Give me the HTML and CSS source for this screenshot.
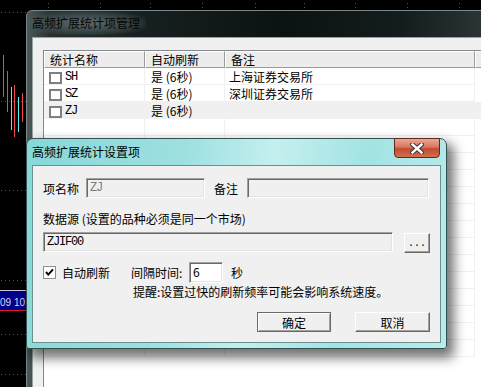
FILE: index.html
```html
<!DOCTYPE html>
<html lang="zh-CN">
<head>
    <meta charset="UTF-8">
    <meta name="viewport" content="width=device-width, initial-scale=1.0">
    <title>高频扩展统计设置项</title>
    <link rel="stylesheet" href="styles.css">
</head>
<body>
<div class="screen">
    <!-- 行情图 (背景) -->
    <svg class="chart" width="481" height="387" viewBox="0 0 481 387">
        <rect width="481" height="387" fill="#000"/>
        <g stroke="#d01a1a" stroke-width="1" stroke-dasharray="1 3">
            <line x1="1" y1="12.5" x2="26" y2="12.5"/>
            <line x1="1" y1="101.5" x2="26" y2="101.5"/>
            <line x1="1" y1="190.5" x2="26" y2="190.5"/>
            <line x1="1" y1="280.5" x2="26" y2="280.5"/>
            <line x1="1" y1="334.5" x2="26" y2="334.5"/>
            <line x1="1" y1="374.5" x2="26" y2="374.5"/>
            <line x1="48.5" y1="3" x2="48.5" y2="10"/>
            <line x1="100.5" y1="3" x2="100.5" y2="10"/>
            <line x1="150.5" y1="3" x2="150.5" y2="10"/>
            <line x1="202.5" y1="3" x2="202.5" y2="10"/>
            <line x1="255.5" y1="3" x2="255.5" y2="10"/>
            <line x1="304.5" y1="3" x2="304.5" y2="10"/>
            <line x1="355.5" y1="3" x2="355.5" y2="10"/>
            <line x1="407.5" y1="3" x2="407.5" y2="10"/>
            <line x1="459.5" y1="3" x2="459.5" y2="10"/>
        </g>
        <g stroke-width="1">
            <line x1="3.5" y1="55" x2="3.5" y2="97" stroke="#f04848"/>
            <line x1="7.5" y1="71" x2="7.5" y2="112" stroke="#f04848"/>
            <line x1="11.5" y1="87" x2="11.5" y2="130" stroke="#50f0f0"/>
            <line x1="14.5" y1="85" x2="14.5" y2="137" stroke="#f04848"/>
            <line x1="18.5" y1="97" x2="18.5" y2="132" stroke="#50f0f0"/>
            <line x1="22.5" y1="93" x2="22.5" y2="122" stroke="#f04848"/>
        </g>
        <rect x="0" y="290" width="26" height="21" fill="#00008c"/>
        <line x1="0" y1="290.5" x2="26" y2="290.5" stroke="#c8c8d8"/>
        <line x1="0" y1="310.5" x2="26" y2="310.5" stroke="#e02020"/>
        <text x="0" y="305.5" fill="#dcdcf0" font-family="Liberation Sans, sans-serif" font-size="10" textLength="25">09 10</text>
    </svg>

    <!-- 后面的管理窗口 -->
    <div class="win mgr">
        <div class="mgr-title"><span class="glow">高频扩展统计项管理</span></div>
        <div class="mgr-client">
            <div class="list">
                <div class="list-head">
                    <div class="hc c1">统计名称</div>
                    <div class="hc c2">自动刷新</div>
                    <div class="hc c3">备注</div>
                    <div class="hc c4"></div>
                </div>
                <div class="row">
                    <div class="cell c1"><span class="lbox"></span><span class="mono">SH</span></div>
                    <div class="cell c2">是 (6秒)</div>
                    <div class="cell c3">上海证券交易所</div>
                </div>
                <div class="row">
                    <div class="cell c1"><span class="lbox"></span><span class="mono">SZ</span></div>
                    <div class="cell c2">是 (6秒)</div>
                    <div class="cell c3">深圳证券交易所</div>
                </div>
                <div class="row sel">
                    <div class="cell c1"><span class="lbox"></span><span class="mono">ZJ</span></div>
                    <div class="cell c2">是 (6秒)</div>
                    <div class="cell c3"></div>
                </div>
                <div class="row"><div class="cell c1"></div><div class="cell c2"></div><div class="cell c3"></div></div>
                <div class="row"><div class="cell c1"></div><div class="cell c2"></div><div class="cell c3"></div></div>
                <div class="row"><div class="cell c1"></div><div class="cell c2"></div><div class="cell c3"></div></div>
                <div class="row"><div class="cell c1"></div><div class="cell c2"></div><div class="cell c3"></div></div>
                <div class="row"><div class="cell c1"></div><div class="cell c2"></div><div class="cell c3"></div></div>
                <div class="row"><div class="cell c1"></div><div class="cell c2"></div><div class="cell c3"></div></div>
                <div class="row"><div class="cell c1"></div><div class="cell c2"></div><div class="cell c3"></div></div>
                <div class="row"><div class="cell c1"></div><div class="cell c2"></div><div class="cell c3"></div></div>
                <div class="row"><div class="cell c1"></div><div class="cell c2"></div><div class="cell c3"></div></div>
                <div class="row"><div class="cell c1"></div><div class="cell c2"></div><div class="cell c3"></div></div>
                <div class="row"><div class="cell c1"></div><div class="cell c2"></div><div class="cell c3"></div></div>
                <div class="row"><div class="cell c1"></div><div class="cell c2"></div><div class="cell c3"></div></div>
                <div class="row"><div class="cell c1"></div><div class="cell c2"></div><div class="cell c3"></div></div>
                <div class="row"><div class="cell c1"></div><div class="cell c2"></div><div class="cell c3"></div></div>
            </div>
        </div>
    </div>

    <!-- 设置对话框 -->
    <div class="win dlg">
        <div class="dlg-title">高频扩展统计设置项</div>
        <button class="close">
            <svg width="14" height="11" viewBox="0 0 14 11">
                <path d="M2.5 1.5 L11.5 9.5 M11.5 1.5 L2.5 9.5" stroke="#3b3b3b" stroke-width="4.6" stroke-linecap="square"/>
                <path d="M2.5 1.5 L11.5 9.5 M11.5 1.5 L2.5 9.5" stroke="#fff" stroke-width="2.4" stroke-linecap="square"/>
            </svg>
        </button>
        <div class="dlg-client">
            <div class="frow r1">
                <span class="lbl-name">项名称</span>
                <span class="field f-name mono gray">ZJ</span>
                <span class="lbl-note">备注</span>
                <span class="field f-note"></span>
            </div>
            <div class="r2">数据源 (设置的品种必须是同一个市场)</div>
            <div class="frow r3">
                <span class="field f-src mono">ZJIF00</span>
                <button class="btn dots">...</button>
            </div>
            <div class="frow r4">
                <span class="chk">
                    <svg width="11" height="11" viewBox="0 0 11 11">
                        <path d="M2 5 L4.3 7.6 L9 2.4" fill="none" stroke="#000" stroke-width="2"/>
                    </svg>
                </span>
                <span class="lbl-auto">自动刷新</span>
                <span class="lbl-gap">间隔时间:</span>
                <span class="field f-num">6</span>
                <span class="lbl-sec">秒</span>
            </div>
            <div class="tip">提醒:设置过快的刷新频率可能会影响系统速度。</div>
            <div class="frow r6">
                <button class="btn ok">确定</button>
                <button class="btn cancel">取消</button>
            </div>
        </div>
    </div>
</div>
</body>
</html>
```

FILE: styles.css
```css
* {
  margin: 0;
  padding: 0;
  box-sizing: border-box;
}

body {
  width: 481px;
  height: 387px;
  overflow: hidden;
  background-color: #000;
  font-family: "Noto Sans CJK SC", "Liberation Sans", sans-serif;
  font-size: 12px;
  color: #000;
}

.screen {
  position: relative;
  width: 481px;
  height: 387px;
  overflow: hidden;
}

.chart {
  position: absolute;
  left: 0;
  top: 0;
}

.mono {
  font-family: "Liberation Mono", monospace;
  font-size: 12px;
  letter-spacing: -1.2px;
}

.win {
  position: absolute;
}

/* 管理窗口 */
.mgr {
  left: 26px;
  top: 10px;
  width: 470px;
  height: 400px;
  border: 1px solid #7b8888;
  border-radius: 6px 6px 0 0;
  padding-left: 5px;
  background: linear-gradient(90deg, #4d5a5a 0%, #26302f 5%, #172020 25%, #0a1212 55%, #141d1d 80%, #2e3838 100%);
}

.mgr-title {
  height: 26px;
  line-height: 24px;
  color: #050505;
}

.glow {
  display: inline-block;
  padding: 0 6px;
  margin-left: -6px;
  background: radial-gradient(ellipse at center, rgba(110, 128, 128, 0.75) 0%, rgba(80, 96, 96, 0.45) 55%, rgba(60, 72, 72, 0) 80%);
}

.mgr-client {
  height: 372px;
  background-color: #f0f0f0;
  border-top: 1px solid #96a2a2;
  border-left: 1px solid #96a2a2;
  padding: 12px 0 0 10px;
}

.list {
  height: 400px;
  border: 1px solid #828790;
  background-color: #fff;
}

.list-head {
  display: flex;
  height: 17px;
}

.hc {
  height: 17px;
  border: 1px solid;
  border-color: #fff #9a9a9a #9a9a9a #fff;
  background-color: #ececec;
  line-height: 15px;
  padding-left: 5px;
}

.c1 { width: 101px; }
.c2 { width: 80px; }
.c3 { width: 250px; }
.c4 { flex: 1; }

.row {
  display: flex;
  height: 17px;
}

.row.sel {
  background-color: #f0f0f0;
}

.cell {
  height: 17px;
  border-right: 1px solid #f0f0f0;
  border-bottom: 1px solid #f0f0f0;
  line-height: 18px;
  white-space: nowrap;
}

.cell.c1 {
  display: flex;
  padding-left: 5px;
}

.cell.c2 { padding-left: 6px; }
.cell.c3 { padding-left: 4px; }

.lbox {
  width: 13px;
  height: 12px;
  margin: 4px 3px 0 0;
  border: 2px solid #7f7f7f;
  background-color: #fff;
}

/* 设置对话框 */
.dlg {
  left: 26px;
  top: 138px;
  width: 421px;
  height: 211px;
  border: 1px solid #34504f;
  border-radius: 7px 7px 3px 3px;
  padding: 0 5px 5px;
  background: linear-gradient(100deg, #86d8d8 0%, #9ee0e0 35%, #c4efef 55%, #a4e3e3 75%, #b8ecec 100%);
  box-shadow: 5px 7px 12px 2px rgba(0, 0, 0, 0.55);
}

.dlg-title {
  height: 26px;
  line-height: 26px;
}

.close {
  position: absolute;
  top: -1px;
  left: 367px;
  width: 46px;
  height: 20px;
  display: flex;
  align-items: center;
  justify-content: center;
  border: 1px solid #5e2b22;
  border-radius: 0 0 4px 4px;
  background: linear-gradient(#eaa896, #d7765f 45%, #c24a31 55%, #d2704f);
}

.dlg-client {
  height: 178px;
  border: 1px solid #6c8f8f;
  background-color: #f0f0f0;
  padding: 12px 0 0 10px;
}

.frow {
  display: flex;
  align-items: center;
}

.r1 { height: 20px; }

.lbl-name { width: 43px; }
.lbl-note { width: 33px; margin-left: 9px; }

.field {
  height: 20px;
  border: 1px solid;
  border-color: #a0a0a0 #fff #fff #a0a0a0;
  box-shadow: inset 1px 1px 0 #696969, inset -1px -1px 0 #e3e3e3;
  background-color: #f0f0f0;
  padding-left: 3px;
  line-height: 18px;
}

.gray { color: #7a7a7a; }

.f-name { width: 119px; }
.f-note { width: 182px; }

.r2 {
  margin-top: 14px;
  height: 14px;
  line-height: 14px;
}

.r3 {
  margin-top: 6px;
  align-items: flex-start;
}

.f-src { width: 350px; }

.btn {
  height: 20px;
  border: 1px solid;
  border-color: #fff #696969 #696969 #fff;
  box-shadow: inset -1px -1px 0 #a0a0a0;
  background-color: #f0f0f0;
  font-family: "Noto Sans CJK SC", sans-serif;
  font-size: 12px;
  line-height: 17px;
  color: #000;
}

.dots {
  width: 26px;
  margin: 1px 0 0 11px;
  font-family: "Liberation Mono", monospace;
  font-size: 10px;
}

.r4 {
  margin-top: 9px;
  height: 21px;
}

.chk {
  width: 13px;
  height: 13px;
  border: 1px solid #8e8f8f;
  background-color: #fff;
  display: flex;
  align-items: center;
  justify-content: center;
}

.lbl-auto { margin-left: 6px; }
.lbl-gap { width: 52px; margin-left: 21px; }

.f-num {
  width: 34px;
  height: 21px;
  margin-left: 6px;
  background-color: #fff;
}

.lbl-sec { margin-left: 8px; }

.tip {
  margin-top: 2px;
  padding-left: 90px;
  height: 14px;
  line-height: 14px;
}

.r6 {
  margin-top: 13px;
  padding-left: 214px;
}

.ok {
  width: 74px;
  border-color: #696969;
  box-shadow: inset 1px 1px 0 #fff, inset -1px -1px 0 #a0a0a0;
}

.cancel {
  width: 75px;
  margin-left: 24px;
}
```
